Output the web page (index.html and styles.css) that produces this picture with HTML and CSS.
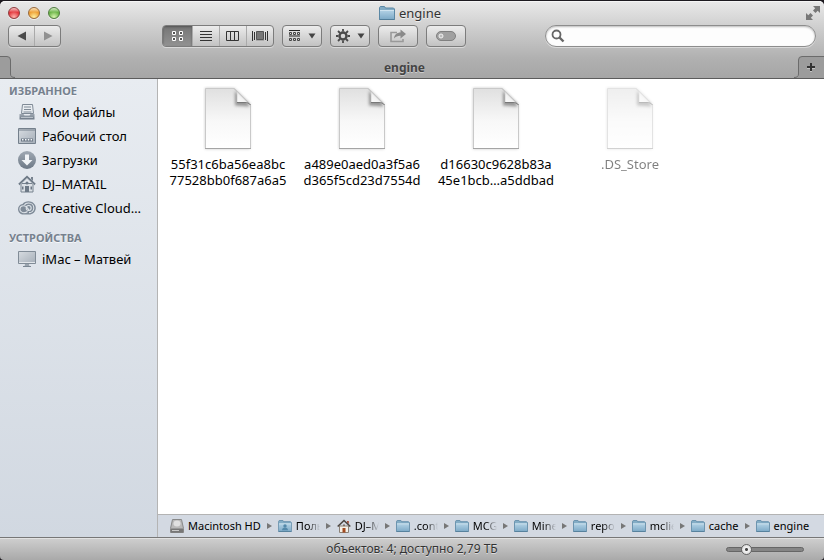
FILE: index.html
```html
<!DOCTYPE html>
<html lang="ru">
<head>
<meta charset="utf-8">
<meta name="viewport" content="width=device-width, initial-scale=1">
<title>engine</title>
<link rel="stylesheet" href="styles.css">
</head>
<body>
<svg class="defs" aria-hidden="true">
  <defs>
    <linearGradient id="folder-fill" x1="0" y1="0" x2="0" y2="1"><stop offset="0" stop-color="#b4d3e6"/><stop offset="1" stop-color="#7fabc8"/></linearGradient>
    <linearGradient id="paper-fill" x1="0" y1="0" x2="0" y2="1"><stop offset="0" stop-color="#e0e0e0"/><stop offset=".55" stop-color="#f8f8f8"/><stop offset="1" stop-color="#fff"/></linearGradient>
    <linearGradient id="fold-fill" x1="0" y1="1" x2="1" y2="0"><stop offset="0" stop-color="#fff"/><stop offset=".4" stop-color="#f4f4f4"/><stop offset="1" stop-color="#bbb"/></linearGradient>
    <linearGradient id="steel" x1="0" y1="0" x2="0" y2="1"><stop offset="0" stop-color="#a0a9b3"/><stop offset="1" stop-color="#6d7986"/></linearGradient>
    <linearGradient id="pale" x1="0" y1="0" x2="1" y2="1"><stop offset="0" stop-color="#d7dce1"/><stop offset="1" stop-color="#a5aeb8"/></linearGradient>
    <filter id="soft" x="-50%" y="-50%" width="200%" height="200%"><feGaussianBlur stdDeviation="1.5"/></filter>
  </defs>
  <symbol id="folder" viewBox="0 0 16 14">
    <path d="M.5 13.5V1.5l.8-1h4.2l1 1.500h8l1 1v10.500z" fill="#83acc5" stroke="#5b88a5"/>
    <path d="M1 4h14v9H1z" fill="url(#folder-fill)"/>
    <path d="M1 4.500h14" stroke="#cfe3ef"/>
    <path d="M.5 13.500h15" stroke="#527d99"/>
  </symbol>
  <symbol id="paper" viewBox="0 0 50 66">
    <path d="M2 2h29l16 16v45H2z" fill="#888" opacity=".45" filter="url(#soft)"/>
    <path d="M2.500 2.500h28.500L47.500 19v43.500h-45z" fill="url(#paper-fill)" stroke="#c9c9c9"/>
    <path d="M2 62.500h46" stroke="#a4a4a4"/>
    <path d="M32 5v14.500l14 1V18z" fill="#666" opacity=".65" filter="url(#soft)"/>
    <path d="M31 2.500c2.500 1 3 3 3 6.500v7.500h7c3.500 0 5 .5 6.500 2.500z" fill="url(#fold-fill)" stroke="#c2c2c2" stroke-width=".7"/>
    <path d="M34 16.500h7c3.500 0 5 .5 6.500 2.500" fill="none" stroke="#777"/>
  </symbol>
</svg>
<div class="window">
  <header class="chrome">
    <div class="titlebar">
      <div class="lights">
        <button class="light red" type="button" aria-label="Закрыть"></button>
        <button class="light amber" type="button" aria-label="Свернуть"></button>
        <button class="light green" type="button" aria-label="Увеличить"></button>
      </div>
      <h1 class="title"><svg width="16" height="14" aria-hidden="true"><use href="#folder"/></svg>engine</h1>
      <button class="fullscreen" type="button" aria-label="На весь экран">
        <svg width="14" height="14" viewBox="0 0 14 14"><path d="M7 0h7v7l-2.300-2.200L9.500 7 7 4.500l2.200-2.200zM7 14H0V7l2.300 2.200L4.500 7 7 9.500l-2.200 2.200z" fill="#777"/></svg>
      </button>
    </div>
    <div class="toolbar">
      <div class="group nav">
        <button type="button" aria-label="Назад"><svg width="10" height="10" viewBox="0 0 10 10"><path d="M9 .5v9L.5 5z" fill="#4a4a4a"/></svg></button>
        <button type="button" aria-label="Вперед"><svg width="10" height="10" viewBox="0 0 10 10"><path d="M1 .5v9L9.500 5z" fill="#919191"/></svg></button>
      </div>
      <div class="group views">
        <button type="button" class="on" aria-label="Значки"><svg width="11" height="10" viewBox="0 0 11 10"><path d="M.5.5h3v3h-3zM7.500.5h3v3h-3zM.5 6.500h3v3h-3zM7.500 6.500h3v3h-3z" fill="#555" stroke="#fff"/></svg></button>
        <button type="button" aria-label="Список"><svg width="12" height="12" viewBox="0 0 12 12"><path d="M0 1.500h12M0 4.500h12M0 7.500h12M0 10.500h12" stroke="#333"/></svg></button>
        <button type="button" aria-label="Колонки"><svg width="14" height="12" viewBox="0 0 14 12"><path d="M.5 1.500h12v9H.5zM4.500 1v10M8.500 1v10" fill="none" stroke="#333"/></svg></button>
        <button type="button" aria-label="Cover Flow"><svg width="16" height="12" viewBox="0 0 16 12"><path d="M.5 1v10M2.500 2v8M13.500 2v8M15.500 1v10" stroke="#333"/><path d="M4.500 1.500h7v8h-7z" fill="#777" stroke="#555"/><path d="M4 10.500h8" stroke="#aaa"/></svg></button>
      </div>
      <button type="button" class="single" aria-label="Упорядочить">
        <svg width="12" height="12" viewBox="0 0 12 12"><path d="M0 .5h11M0 6h11" stroke="#222"/><path d="M.5 2.500h2v2h-2zM4.500 2.500h2v2h-2zM8.500 2.500h2v2h-2zM.5 8.500h2v2h-2zM4.500 8.500h2v2h-2zM8.500 8.500h2v2h-2z" fill="none" stroke="#444"/></svg>
        <svg width="8" height="6" viewBox="0 0 8 6"><path d="M.5.5h7L4 5.500z" fill="#444"/></svg>
      </button>
      <button type="button" class="single" aria-label="Действия">
        <svg width="14" height="14" viewBox="0 0 14 14"><circle cx="7" cy="7" r="3.500" fill="none" stroke="#4a4a4a" stroke-width="2.400"/><path d="M7 0v2.500M7 11.500V14M0 7h2.500M11.500 7H14M2 2l2 2M10 10l2 2M12 2l-2 2M4 10l-2 2" stroke="#4a4a4a" stroke-width="1.800"/></svg>
        <svg width="8" height="6" viewBox="0 0 8 6"><path d="M.5.5h7L4 5.500z" fill="#444"/></svg>
      </button>
      <button type="button" class="single" aria-label="Поделиться">
        <svg width="16" height="14" viewBox="0 0 16 14"><path d="M7 3.500H1v9h12V10" fill="none" stroke="#999" stroke-width="1.600"/><path d="M4 9.500C4.500 5.500 7 3.700 10.500 3.600V.5L16 5l-5.500 4.500V6.800C8 6.700 5.800 7.500 4 9.500z" fill="#8a8a8a"/></svg>
      </button>
      <button type="button" class="single" aria-label="Метки">
        <svg width="20" height="12" viewBox="0 0 20 12"><rect x=".5" y="1.500" width="19" height="9" rx="4.500" fill="#a0a0a0" stroke="#808080"/><circle cx="5" cy="6" r="2" fill="#bbb" stroke="#f2f2f2"/></svg>
      </button>
      <label class="search">
        <svg width="14" height="14" viewBox="0 0 14 14"><circle cx="5.500" cy="5.500" r="4" fill="none" stroke="#666" stroke-width="1.800"/><path d="M8.500 8.500l4 4" stroke="#666" stroke-width="2.400"/></svg>
        <input type="search" aria-label="Поиск">
      </label>
    </div>
    <div class="tabs">
      <svg width="15" height="22" viewBox="0 0 15 22" aria-hidden="true"><path d="M0 .5h7q3.500 0 3.500 3.500v14q0 3.500 4.500 3.500v.5H0z" fill="#9c9c9c"/><path d="M0 .5h7q3.500 0 3.500 3.500v14q0 3.500 4.500 3.500" fill="none" stroke="#6b6b6b"/></svg>
      <span class="tab-name">engine</span>
      <button type="button" class="tab-add" aria-label="Новая вкладка"><svg width="30" height="22" viewBox="0 0 30 22"><path d="M30 .5H8Q4.500.5 4.500 4v14Q4.500 21.500 0 21.500v.5h30z" fill="#9c9c9c"/><path d="M30 .5H8Q4.500.5 4.500 4v14Q4.500 21.500 0 21.500" fill="none" stroke="#6b6b6b"/><path d="M17 8v8M13 12h8" stroke="#c2c2c2" stroke-width="2"/><path d="M17 7v8M13 11h8" stroke="#333" stroke-width="2"/></svg></button>
    </div>
  </header>
  <div class="body">
    <nav class="sidebar">
      <h2>ИЗБРАННОЕ</h2>
      <ul>
        <li><a href="#"><svg width="18" height="18" viewBox="0 0 18 18"><path d="M4.500 1.500h10l1 9h-12z" fill="#e9edf1" stroke="#7f8a96"/><path d="M6 4h7M6 6.500h7M5.500 9h8" stroke="#7f8a96"/><path d="M1.500 11h4l1 1.500h5l1-1.500h4v5.500h-15z" fill="url(#steel)"/><path d="M3 14.500h12" stroke="#b9c1c9"/></svg><span>Мои файлы</span></a></li>
        <li><a href="#"><svg width="18" height="18" viewBox="0 0 18 18"><path d="M.5 1.500h17v15H.5z" fill="url(#pale)" stroke="#74808c"/><path d="M1 3h16" stroke="#74808c"/><path d="M3 11.500h12v3H3z" fill="#6d7986"/><path d="M4 12h1.500v1.500H4zM7 12h1.500v1.500H7zM9.800 12h1.500v1.500H9.800zM12.600 12h1.500v1.500h-1.500z" fill="#f3f6f8"/></svg><span>Рабочий стол</span></a></li>
        <li><a href="#"><svg width="18" height="18" viewBox="0 0 18 18"><circle cx="9" cy="9" r="9" fill="url(#steel)"/><path d="M7 3.500h4V9h3.500L9 14.500 3.500 9H7z" fill="#f1f4f7"/></svg><span>Загрузки</span></a></li>
        <li><a href="#"><svg width="18" height="18" viewBox="0 0 18 18"><path d="M3 8.500h12V17H3z" fill="#dce1e6" stroke="#77828e"/><path d="M13 2h2v4l-2-2z" fill="#77828e"/><path d="M1 9.500l8-7.500 8 7.500" fill="none" stroke="#6d7986" stroke-width="2.200"/><path d="M2 9.700l7-6.500 7 6.500" fill="none" stroke="#c1c8cf" stroke-width=".7"/><circle cx="9" cy="8" r="1.500" fill="#6d7986"/><path d="M7 11h4v6H7zM4 11.500h1.500v3H4zM12.500 11.500H14v3h-1.500z" fill="#6d7986"/></svg><span>DJ–MATAIL</span></a></li>
        <li><a href="#"><svg width="18" height="18" viewBox="0 0 18 18"><path d="M5.500 15.500C2.500 15.500 0 13.200 0 10.200 0 7.500 2 5.300 4.500 5 5.800 3.200 8 2.300 10.500 2.300c4 0 7.300 2.900 7.300 6.600s-3 6.600-6.800 6.600z" fill="#7f8b98"/><g fill="none" stroke="#dfe4e9" stroke-width="1.100"><path d="M9.500 12.500c-1 .9-2.300 1.200-3.700 1.200-2.200 0-3.900-1.500-3.900-3.500s1.700-3.500 3.800-3.500c2.700 0 3.300 2 5.300 4.300"/><path d="M6.300 6.200c.8-1.500 2.300-2.200 4.200-2.200 3 0 5.300 2.100 5.300 4.900s-2.100 4.700-4.800 4.700"/><circle cx="10.700" cy="9" r="2.500"/></g></svg><span>Creative Cloud…</span></a></li>
      </ul>
      <h2>УСТРОЙСТВА</h2>
      <ul>
        <li><a href="#"><svg width="18" height="18" viewBox="0 0 18 18"><path d="M.5 1.500h17v12H.5z" fill="url(#pale)" stroke="#818c97"/><path d="M1 12.500h16" stroke="#e2e6ea"/><path d="M7 14h4l.5 2.500h-5z" fill="#9aa4ae"/><path d="M5 16.500h8" stroke="#7b8793"/></svg><span>iMac – Матвей</span></a></li>
      </ul>
    </nav>
    <div class="content">
      <main class="files">
        <figure><svg width="50" height="66" aria-hidden="true"><use href="#paper"/></svg><figcaption>55f31c6ba56ea8bc<br>77528bb0f687a6a5</figcaption></figure>
        <figure><svg width="50" height="66" aria-hidden="true"><use href="#paper"/></svg><figcaption>a489e0aed0a3f5a6<br>d365f5cd23d7554d</figcaption></figure>
        <figure><svg width="50" height="66" aria-hidden="true"><use href="#paper"/></svg><figcaption>d16630c9628b83a<br>45e1bcb…a5ddbad</figcaption></figure>
        <figure class="hidden-file"><svg width="50" height="66" aria-hidden="true"><use href="#paper"/></svg><figcaption>.DS_Store</figcaption></figure>
      </main>
      <ol class="path">
        <li><svg width="14" height="14" viewBox="0 0 14 14"><path d="M2.500.5h9l2 9v4H.5v-4z" fill="#b9b9b9" stroke="#888"/><ellipse cx="7" cy="4.500" rx="3.500" ry="3" fill="#e0e0e0"/><path d="M1 9.500h12v4H1z" fill="#777"/><path d="M2 11.500h7" stroke="#c9c9c9"/></svg><span>Macintosh HD</span></li>
        <li class="cut"><svg width="14" height="12" viewBox="0 0 16 14"><use href="#folder" width="16" height="14"/><circle cx="8" cy="7" r="2" fill="#5489aa"/><path d="M4.500 12c0-2.500 1.500-3 3.500-3s3.500.5 3.500 3z" fill="#5489aa"/></svg><span>Поль</span></li>
        <li class="cut"><svg width="14" height="14" viewBox="0 0 14 14"><path d="M2.500 7h9v6.500h-9z" fill="#f5f1e8" stroke="#8b8177"/><path d="M10 2h1.800v3L10 3.500z" fill="#a34a32"/><path d="M.7 7.500L7 1.500l6.300 6" fill="none" stroke="#4b4541" stroke-width="1.600"/><path d="M5.500 9h3v4.500h-3z" fill="#a34a20"/><circle cx="7" cy="6.300" r="1" fill="#7a6a60"/></svg><span>DJ–M</span></li>
        <li class="cut"><svg width="14" height="12"><use href="#folder"/></svg><span>.cont</span></li>
        <li class="cut"><svg width="14" height="12"><use href="#folder"/></svg><span>MCG</span></li>
        <li class="cut"><svg width="14" height="12"><use href="#folder"/></svg><span>Mine</span></li>
        <li class="cut"><svg width="14" height="12"><use href="#folder"/></svg><span>repo</span></li>
        <li class="cut"><svg width="14" height="12"><use href="#folder"/></svg><span>mclie</span></li>
        <li><svg width="14" height="12"><use href="#folder"/></svg><span>cache</span></li>
        <li><svg width="14" height="12"><use href="#folder"/></svg><span>engine</span></li>
      </ol>
    </div>
  </div>
  <footer class="status">
    <span>объектов: 4; доступно 2,79 ТБ</span>
    <input type="range" min="0" max="100" value="21" aria-label="Размер значков">
  </footer>
</div>
</body>
</html>
```
FILE: styles.css
```css
* { box-sizing: border-box; }

body {
  margin: 0;
  background: #1d1a20;
  color: #000;
  font: 13px/16px "Noto Sans", "Open Sans", sans-serif;
}

button, input { margin: 0; padding: 0; border: 0; background: none; font: inherit; }
h1, h2, ul, ol, figure { margin: 0; padding: 0; }
ul, ol { list-style: none; }
svg { display: block; flex: none; }
.defs { position: absolute; width: 0; height: 0; }

.window {
  display: flex;
  flex-direction: column;
  height: 100vh;
  padding-top: 1px;
}

/* Title bar, toolbar and tabs */
.chrome {
  border-bottom: 1px solid #5c5c5c;
  border-radius: 5px 5px 0 0;
  background: linear-gradient(#e9e9e9, #cdcdcd 36%, #b0b0b0 75%, #a6a6a6);
  box-shadow: inset 0 1px #f5f5f5;
}

.titlebar {
  display: grid;
  grid-template-columns: 80px 1fr 80px;
  align-items: center;
  height: 24px;
  padding: 0 4px 0 8px;
}

.lights { display: flex; gap: 8px; }
.light { width: 12px; height: 12px; border: 1px solid; border-radius: 50%; box-shadow: 0 1px #eee; }
.red { border-color: #8e3a3c; background: radial-gradient(circle at 50% 90%, #ffb4ae, transparent 55%), linear-gradient(#f5c5c5, #e3393f 45%); }
.amber { border-color: #98683a; background: radial-gradient(circle at 50% 90%, #fff0a0, transparent 55%), linear-gradient(#fbe3bb, #ee9f35 45%); }
.green { border-color: #4f7a3e; background: radial-gradient(circle at 50% 90%, #d8f5b0, transparent 55%), linear-gradient(#d5ecc6, #6cb548 45%); }

.title {
  display: flex;
  justify-content: center;
  align-items: center;
  gap: 4px;
  padding-right: 8px;
  color: #333;
  font-size: 13px;
  font-weight: 400;
  text-shadow: 0 1px #eee;
}

.fullscreen { justify-self: end; }

.toolbar { display: flex; gap: 8px; padding: 0 8px; }

.group, .single {
  display: flex;
  align-items: center;
  height: 22px;
  border: 1px solid #7c7c7c;
  border-radius: 4px;
  background: linear-gradient(#ececec, #c2c2c2);
  box-shadow: 0 1px #d9d9d9;
  overflow: hidden;
}

.group button { display: grid; flex: 1; place-items: center; align-self: stretch; }
.group button + button { border-left: 1px solid #aaa; }
.nav { width: 53px; margin-right: 93px; }
.views { width: 112px; }
.views .on { flex: 0 0 29px; background: linear-gradient(#757575, #929292); box-shadow: inset 0 1px 2px #555; }
.single { width: 40px; justify-content: center; gap: 7px; }

.search {
  display: flex;
  flex: 1;
  align-items: center;
  gap: 4px;
  height: 22px;
  margin-left: 71px;
  padding: 0 5px;
  border: 1px solid #8d8d8d;
  border-radius: 11px;
  background: #fdfdfd;
  box-shadow: inset 0 1px 2px #bbb, 0 1px #d9d9d9;
}

.search input { flex: 1; min-width: 0; outline: 0; }

.tabs {
  display: grid;
  grid-template-columns: 15px 1fr 30px;
  height: 22px;
  margin-top: 9px;
}

.tab-name {
  padding-top: 4px;
  color: #444;
  font-size: 12px;
  font-weight: 700;
  text-align: center;
  text-shadow: 0 1px #ccc;
}

/* Main area */
.body { display: flex; flex: 1; min-height: 0; }

.sidebar {
  flex: 0 0 158px;
  min-width: 0;
  border-right: 1px solid #b4b4b4;
  background: linear-gradient(#e8ecf1, #d1d8e1);
}

.sidebar h2 {
  padding: 4px 9px 1px;
  color: #76818e;
  font-size: 11px;
  font-weight: 700;
  text-shadow: 0 1px #f5f7fa;
}

.sidebar ul + h2 { padding-top: 10px; }

.sidebar a {
  display: flex;
  align-items: center;
  gap: 6px;
  height: 24px;
  padding: 0 9px 0 18px;
  color: inherit;
  text-decoration: none;
  white-space: nowrap;
}

.content { display: flex; flex: 1; flex-direction: column; min-width: 0; background: #fff; }

.files {
  display: grid;
  flex: 1;
  grid-template-columns: repeat(auto-fill, 134px);
  align-content: start;
  padding: 7px 0 0 3px;
}

.files figure { display: flex; flex-direction: column; align-items: center; gap: 4px; }
.files figcaption { text-align: center; }
.hidden-file { opacity: .5; }

.path {
  display: flex;
  align-items: center;
  height: 23px;
  padding-left: 12px;
  border-top: 1px solid #b3b3b3;
  background: #d3d9e2;
  font-size: 11px;
  white-space: nowrap;
}

.path li { display: flex; align-items: center; gap: 4px; }
.path li + li::before {
  margin: 0 2px 0 6px;
  border: solid transparent;
  border-width: 3px 0 3px 5px;
  border-left-color: #777;
  content: "";
}

.cut span { width: 24px; overflow: hidden; -webkit-mask-image: linear-gradient(90deg, #000 50%, transparent); mask-image: linear-gradient(90deg, #000 50%, transparent); }

.status {
  display: grid;
  grid-template-columns: 1fr auto 1fr;
  align-items: center;
  height: 23px;
  padding: 0 20px;
  border-top: 1px solid #777;
  border-radius: 0 0 4px 4px;
  background: linear-gradient(#cfcfcf, #a9a9a9);
  box-shadow: inset 0 1px #e2e2e2;
  color: #333;
  font-size: 12px;
  text-shadow: 0 1px #ddd;
}

.status span { grid-column: 2; }

.status input { justify-self: end; width: 78px; height: 14px; -webkit-appearance: none; appearance: none; }
.status input::-webkit-slider-runnable-track { height: 5px; border: 1px solid #666; border-radius: 3px; background: #858585; }
.status input::-webkit-slider-thumb {
  width: 11px;
  height: 11px;
  margin-top: -4px;
  border: 1px solid #666;
  border-radius: 50%;
  -webkit-appearance: none;
  appearance: none;
  background: radial-gradient(circle, #444 0 1px, #f2f2f2 2px, #d2d2d2);
}
```
